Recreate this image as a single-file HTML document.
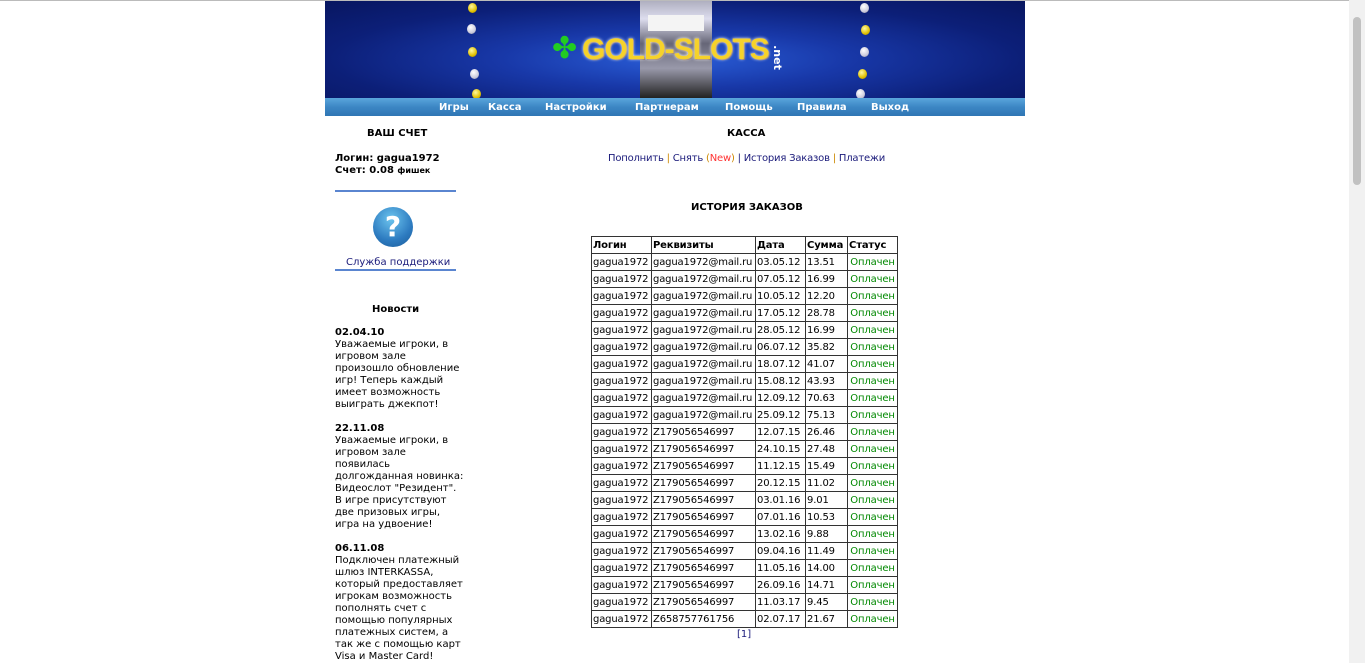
<!DOCTYPE html>
<html><head><meta charset="utf-8"><style>
body{margin:0;width:1365px;height:663px;overflow:hidden;background:#fff;font-family:"DejaVu Sans","Liberation Sans",sans-serif;font-size:10px;color:#000;position:relative}
.a{position:absolute;white-space:nowrap}
#top{position:absolute;left:0;top:0;width:1349px;height:1px;background:#bbb}
#sb{position:absolute;left:1349px;top:0;width:16px;height:663px;background:#f1f1f1}
#sb div{position:absolute;left:4px;top:17px;width:8px;height:168px;background:#c1c1c1;border-radius:4px}
#ban{position:absolute;left:325px;top:1px;width:700px;height:97px;background:radial-gradient(ellipse at 50% 60%,#2a5ed8 0%,#1838a8 35%,#0c1f78 70%,#081660 100%);overflow:hidden}
#nav{position:absolute;left:325px;top:98px;width:700px;height:18px;background:linear-gradient(#5aa6dc,#3c86c4 50%,#2f76b4)}
#nav span{position:absolute;top:4px;color:#fff;font-weight:bold;font-size:10px}
.dot{position:absolute;width:9px;height:10px;border-radius:50%}
.y{background:radial-gradient(circle at 40% 35%,#fff8a0,#e0c000 60%,#a08000)}
.w{background:radial-gradient(circle at 40% 35%,#fff,#ccd 60%,#889)}
table{border-collapse:collapse;font-size:10px;letter-spacing:-0.15px}
td{border:1px solid #333;padding:2px 1px 0;height:14px;line-height:14px}
.g{color:#080;text-align:center}
.hr{position:absolute;left:335px;width:121px;height:2px;background:#5a85d0}
</style></head><body>
<div id="top"></div>
<div id="sb"><div></div></div>
<div id="ban">
 <div style="position:absolute;left:315px;top:-2px;width:72px;height:99px;background:linear-gradient(#aab,#dde 20%,#667 45%,#99a 70%,#222)"></div>
 <div style="position:absolute;left:323px;top:14px;width:56px;height:16px;background:#f4f4f4"></div>
 <div class="a" style="left:227px;top:30px;color:#2c2;font-size:30px;font-weight:bold">✤</div>
 <div class="a" style="left:257px;top:32px;font-family:'Liberation Sans',sans-serif;font-weight:bold;font-size:30px;color:#f6d22a;text-shadow:0 0 3px #fff,1px 1px 0 #864;letter-spacing:-1px">GOLD-SLOTS</div>
 <div class="a" style="left:440px;top:50px;color:#fff;font-size:11px;transform:rotate(90deg);font-weight:bold">.net</div>
 <div class="dot y" style="left:143px;top:2px"></div><div class="dot w" style="left:142px;top:23px"></div><div class="dot y" style="left:143px;top:46px"></div><div class="dot w" style="left:145px;top:68px"></div><div class="dot y" style="left:147px;top:88px"></div>
 <div class="dot w" style="left:535px;top:2px"></div><div class="dot y" style="left:536px;top:24px"></div><div class="dot w" style="left:535px;top:46px"></div><div class="dot y" style="left:533px;top:68px"></div><div class="dot w" style="left:531px;top:88px"></div>
</div>
<div id="nav"><span style="left:114px">Игры</span><span style="left:163px">Касса</span><span style="left:220px">Настройки</span><span style="left:310px">Партнерам</span><span style="left:400px">Помощь</span><span style="left:472px">Правила</span><span style="left:546px">Выход</span></div>

<div class="a" style="left:367px;top:128px;font-weight:bold">ВАШ СЧЕТ</div>
<div class="a" style="left:335px;top:153px;font-weight:bold">Логин: gagua1972</div>
<div class="a" style="left:335px;top:165px;font-weight:bold">Счет: 0.08 <span style="font-size:8px">фишек</span></div>
<div class="hr" style="top:190px"></div>
<div class="a" style="left:373px;top:207px;width:40px;height:40px;border-radius:50%;background:radial-gradient(circle at 45% 30%,#6cc4ee,#2d7bc0 60%,#1a5a98);color:#fff;font-size:28px;font-weight:bold;text-align:center;line-height:40px">?</div>
<div class="a" style="left:346px;top:257px;color:#1a1a7a">Служба поддержки</div>
<div class="hr" style="top:269px"></div>
<div class="a" style="left:372px;top:304px;font-weight:bold">Новости</div>
<div class="a" style="left:335px;top:327px;line-height:12px"><b>02.04.10</b><br>Уважаемые игроки, в<br>игровом зале<br>произошло обновление<br>игр! Теперь каждый<br>имеет возможность<br>выиграть джекпот!</div>
<div class="a" style="left:335px;top:423px;line-height:12px"><b>22.11.08</b><br>Уважаемые игроки, в<br>игровом зале<br>появилась<br>долгожданная новинка:<br>Видеослот "Резидент".<br>В игре присутствуют<br>две призовых игры,<br>игра на удвоение!</div>
<div class="a" style="left:335px;top:543px;line-height:12px"><b>06.11.08</b><br>Подключен платежный<br>шлюз INTERKASSA,<br>который предоставляет<br>игрокам возможность<br>пополнять счет с<br>помощью популярных<br>платежных систем, а<br>так же с помощью карт<br>Visa и Master Card!</div>

<div class="a" style="left:727px;top:128px;font-weight:bold">КАССА</div>
<div class="a" style="left:608px;top:153px;color:#1a1a7a;letter-spacing:-0.2px">Пополнить <span style="color:#c80">|</span> Снять <span style="color:#c80">(</span><span style="color:#f33">New</span><span style="color:#c80">)</span> | История Заказов <span style="color:#c80">|</span> Платежи</div>
<div class="a" style="left:691px;top:202px;font-weight:bold">ИСТОРИЯ ЗАКАЗОВ</div>
<table class="a" style="left:591px;top:236px;width:307px">
<tr style="font-weight:bold"><td style="width:57px">Логин</td><td style="width:101px">Реквизиты</td><td style="width:47px">Дата</td><td style="width:39px">Сумма</td><td>Статус</td></tr>
<tr><td>gagua1972</td><td>gagua1972@mail.ru</td><td>03.05.12</td><td>13.51</td><td class="g">Оплачен</td></tr>
<tr><td>gagua1972</td><td>gagua1972@mail.ru</td><td>07.05.12</td><td>16.99</td><td class="g">Оплачен</td></tr>
<tr><td>gagua1972</td><td>gagua1972@mail.ru</td><td>10.05.12</td><td>12.20</td><td class="g">Оплачен</td></tr>
<tr><td>gagua1972</td><td>gagua1972@mail.ru</td><td>17.05.12</td><td>28.78</td><td class="g">Оплачен</td></tr>
<tr><td>gagua1972</td><td>gagua1972@mail.ru</td><td>28.05.12</td><td>16.99</td><td class="g">Оплачен</td></tr>
<tr><td>gagua1972</td><td>gagua1972@mail.ru</td><td>06.07.12</td><td>35.82</td><td class="g">Оплачен</td></tr>
<tr><td>gagua1972</td><td>gagua1972@mail.ru</td><td>18.07.12</td><td>41.07</td><td class="g">Оплачен</td></tr>
<tr><td>gagua1972</td><td>gagua1972@mail.ru</td><td>15.08.12</td><td>43.93</td><td class="g">Оплачен</td></tr>
<tr><td>gagua1972</td><td>gagua1972@mail.ru</td><td>12.09.12</td><td>70.63</td><td class="g">Оплачен</td></tr>
<tr><td>gagua1972</td><td>gagua1972@mail.ru</td><td>25.09.12</td><td>75.13</td><td class="g">Оплачен</td></tr>
<tr><td>gagua1972</td><td>Z179056546997</td><td>12.07.15</td><td>26.46</td><td class="g">Оплачен</td></tr>
<tr><td>gagua1972</td><td>Z179056546997</td><td>24.10.15</td><td>27.48</td><td class="g">Оплачен</td></tr>
<tr><td>gagua1972</td><td>Z179056546997</td><td>11.12.15</td><td>15.49</td><td class="g">Оплачен</td></tr>
<tr><td>gagua1972</td><td>Z179056546997</td><td>20.12.15</td><td>11.02</td><td class="g">Оплачен</td></tr>
<tr><td>gagua1972</td><td>Z179056546997</td><td>03.01.16</td><td>9.01</td><td class="g">Оплачен</td></tr>
<tr><td>gagua1972</td><td>Z179056546997</td><td>07.01.16</td><td>10.53</td><td class="g">Оплачен</td></tr>
<tr><td>gagua1972</td><td>Z179056546997</td><td>13.02.16</td><td>9.88</td><td class="g">Оплачен</td></tr>
<tr><td>gagua1972</td><td>Z179056546997</td><td>09.04.16</td><td>11.49</td><td class="g">Оплачен</td></tr>
<tr><td>gagua1972</td><td>Z179056546997</td><td>11.05.16</td><td>14.00</td><td class="g">Оплачен</td></tr>
<tr><td>gagua1972</td><td>Z179056546997</td><td>26.09.16</td><td>14.71</td><td class="g">Оплачен</td></tr>
<tr><td>gagua1972</td><td>Z179056546997</td><td>11.03.17</td><td>9.45</td><td class="g">Оплачен</td></tr>
<tr><td>gagua1972</td><td>Z658757761756</td><td>02.07.17</td><td>21.67</td><td class="g">Оплачен</td></tr>
</table>
<div class="a" style="left:737px;top:629px;color:#1a1a7a">[1]</div>
</body></html>
